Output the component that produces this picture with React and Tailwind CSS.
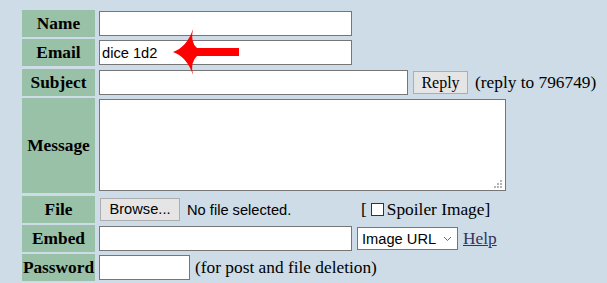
import React from 'react'

// Reply form of an imageboard thread, with a red arrow pointing at the email field

const serif = { fontFamily: '"Liberation Serif", "Times New Roman", serif' }

function Label({ children, tall }) {
  return (
    <div
      className={`w-[73px] shrink-0 bg-[#99c1a8] flex items-center justify-center font-bold text-[17.33px] text-black ${tall ? 'h-[95px]' : 'h-[27px]'}`}
      style={serif}
    >
      {children}
    </div>
  )
}

function TextBox({ w, value = '' }) {
  return (
    <input
      type="text"
      defaultValue={value}
      className={`h-[25px] ${w} bg-white border border-[#767676] px-[2px] text-[14.67px] text-black font-['Liberation_Sans',Arial,sans-serif] outline-none`}
    />
  )
}

function Arrow() {
  return (
    <svg className="absolute left-[170px] top-[27px]" width="72" height="52" viewBox="170 27 72 52">
      <path
        d="M173 52 Q187 47 193 29 Q190 42 197 48 L239 48 L239 56 L197 56 Q190 62 193 75 Q187 57 173 52 Z"
        fill="#ff0000"
      />
    </svg>
  )
}

export default function App() {
  return (
    <div className="relative w-[607px] h-[283px] overflow-hidden bg-[#cddce6] pl-[22px] pt-[10px] text-black">
      <div className="flex flex-col">
        {/* Name */}
        <div className="flex items-center gap-[4px]">
          <Label>Name</Label>
          <TextBox w="w-[253px]" />
        </div>

        {/* Email */}
        <div className="flex items-center gap-[4px] mt-[2px]">
          <Label>Email</Label>
          <TextBox w="w-[253px]" value="dice 1d2" />
        </div>

        {/* Subject */}
        <div className="flex items-center gap-[4px] mt-[3px]">
          <Label>Subject</Label>
          <TextBox w="w-[309px]" />
          <button
            type="button"
            className="ml-[1px] h-[23px] w-[55px] bg-[#e5e5e5] border border-[#adadad] text-[16px] leading-none"
            style={serif}
          >
            Reply
          </button>
          <span className="ml-[3px] text-[17.33px]" style={serif}>(reply to 796749)</span>
        </div>

        {/* Message */}
        <div className="flex items-start gap-[4px] mt-[2px]">
          <Label tall>Message</Label>
          <div className="relative mt-[1px]">
            <textarea className="block w-[407px] h-[92px] bg-white border border-[#767676] resize-none outline-none" />
            <svg className="absolute right-[4px] bottom-[3px]" width="9" height="8" viewBox="0 0 9 8">
              <g fill="#b5b5b5">
                <rect x="7" y="0" width="2" height="2" />
                <rect x="4" y="3" width="2" height="2" />
                <rect x="7" y="3" width="2" height="2" />
                <rect x="1" y="6" width="2" height="2" />
                <rect x="4" y="6" width="2" height="2" />
                <rect x="7" y="6" width="2" height="2" />
              </g>
            </svg>
          </div>
        </div>

        {/* File */}
        <div className="flex items-center gap-[4px] mt-[3px]">
          <Label>File</Label>
          <button
            type="button"
            className="ml-[1px] h-[23px] w-[80px] bg-[#e5e5e5] border border-[#adadad] text-[14.67px] leading-none font-['Liberation_Sans',Arial,sans-serif]"
          >
            Browse...
          </button>
          <span className="ml-[3px] w-[170px] text-[14.67px] font-['Liberation_Sans',Arial,sans-serif]">No file selected.</span>
          <span className="flex items-center text-[17.33px]" style={serif}>
            [
            <span className="ml-[4px] mr-[3px] inline-block w-[13px] h-[13px] bg-white border border-[#333333]" />
            Spoiler Image]
          </span>
        </div>

        {/* Embed */}
        <div className="flex items-center gap-[4px] mt-[2px]">
          <Label>Embed</Label>
          <TextBox w="w-[253px]" />
          <div className="ml-[1px] h-[23px] w-[101px] bg-white border border-[#767676] flex items-center justify-between pl-[4px] pr-[5px] text-[14.67px] font-['Liberation_Sans',Arial,sans-serif]">
            <span>Image URL</span>
            <svg width="9" height="6" viewBox="0 0 9 6">
              <path d="M1 1 L4.5 4.5 L8 1" fill="none" stroke="#6b6b6b" strokeWidth="1" />
            </svg>
          </div>
          <a href="#" className="ml-[1px] text-[17.33px] text-[#34345c] underline" style={serif}>Help</a>
        </div>

        {/* Password */}
        <div className="flex items-center gap-[4px] mt-[2px]">
          <Label>Password</Label>
          <input
            type="password"
            className="h-[25px] w-[91px] bg-white border border-[#767676] outline-none"
          />
          <span className="ml-[1px] text-[17.33px]" style={serif}>(for post and file deletion)</span>
        </div>
      </div>

      <Arrow />
    </div>
  )
}
